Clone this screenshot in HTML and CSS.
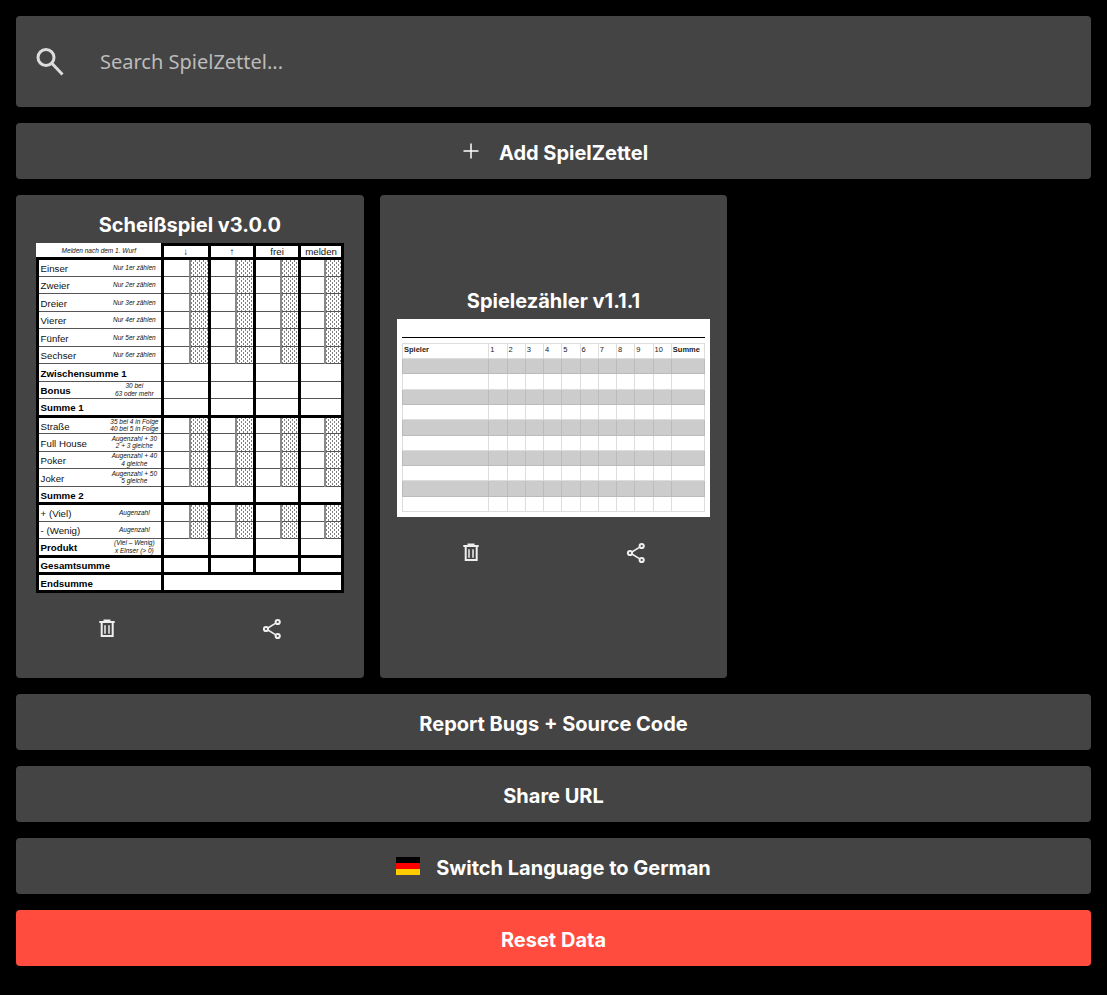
FILE: index.html
```html
<!DOCTYPE html>
<html lang="en">
<head>
  <meta charset="UTF-8" />
  <title>SpielZettel</title>
  <link rel="stylesheet" href="styles.css">
</head>
<body>
  <div class="search">
    <svg class="search-icon" viewBox="0 0 32 32" width="32" height="32"><circle cx="12" cy="11.500" r="8"/><path d="M17.800 17.300 28.500 28.500"/></svg>
    <input class="search-input" type="text" placeholder="Search SpielZettel...">
  </div>

  <button class="btn">
    <svg class="icon" viewBox="0 0 24 24" width="24" height="24"><path d="M12 4.500v15M4.500 12h15"/></svg>
    <span class="label">Add SpielZettel</span>
  </button>

  <div class="cards">
    <div class="card">
      <h2 class="card-title">Scheißspiel v3.0.0</h2>
      <table class="sheet">
        <colgroup>
          <col class="c-name"><col class="c-note">
          <col class="c-a1"><col class="c-d1"><col class="c-a2"><col class="c-d2"><col class="c-a3"><col class="c-d2"><col class="c-a4"><col class="c-d3">
        </colgroup>
        <tr class="head">
          <td class="head-note" colspan="2">Melden nach dem 1. Wurf</td>
          <td class="sec" colspan="2">↓</td><td class="sec" colspan="2">↑</td><td class="sec" colspan="2">frei</td><td class="sec" colspan="2">melden</td>
        </tr>
        <tr class="thick">
          <td class="name">Einser</td><td class="note">Nur 1er zählen</td>
          <td class="sec"></td><td class="dots"></td><td class="sec"></td><td class="dots"></td><td class="sec"></td><td class="dots"></td><td class="sec"></td><td class="dots"></td>
        </tr>
        <tr>
          <td class="name">Zweier</td><td class="note">Nur 2er zählen</td>
          <td class="sec"></td><td class="dots"></td><td class="sec"></td><td class="dots"></td><td class="sec"></td><td class="dots"></td><td class="sec"></td><td class="dots"></td>
        </tr>
        <tr>
          <td class="name">Dreier</td><td class="note">Nur 3er zählen</td>
          <td class="sec"></td><td class="dots"></td><td class="sec"></td><td class="dots"></td><td class="sec"></td><td class="dots"></td><td class="sec"></td><td class="dots"></td>
        </tr>
        <tr>
          <td class="name">Vierer</td><td class="note">Nur 4er zählen</td>
          <td class="sec"></td><td class="dots"></td><td class="sec"></td><td class="dots"></td><td class="sec"></td><td class="dots"></td><td class="sec"></td><td class="dots"></td>
        </tr>
        <tr>
          <td class="name">Fünfer</td><td class="note">Nur 5er zählen</td>
          <td class="sec"></td><td class="dots"></td><td class="sec"></td><td class="dots"></td><td class="sec"></td><td class="dots"></td><td class="sec"></td><td class="dots"></td>
        </tr>
        <tr>
          <td class="name">Sechser</td><td class="note">Nur 6er zählen</td>
          <td class="sec"></td><td class="dots"></td><td class="sec"></td><td class="dots"></td><td class="sec"></td><td class="dots"></td><td class="sec"></td><td class="dots"></td>
        </tr>
        <tr>
          <td class="name bold" colspan="2">Zwischensumme 1</td>
          <td class="sec" colspan="2"></td><td class="sec" colspan="2"></td><td class="sec" colspan="2"></td><td class="sec" colspan="2"></td>
        </tr>
        <tr>
          <td class="name bold">Bonus</td><td class="note">30 bei<br>63 oder mehr</td>
          <td class="sec" colspan="2"></td><td class="sec" colspan="2"></td><td class="sec" colspan="2"></td><td class="sec" colspan="2"></td>
        </tr>
        <tr>
          <td class="name bold" colspan="2">Summe 1</td>
          <td class="sec" colspan="2"></td><td class="sec" colspan="2"></td><td class="sec" colspan="2"></td><td class="sec" colspan="2"></td>
        </tr>
        <tr class="thick">
          <td class="name">Straße</td><td class="note">35 bei 4 in Folge<br>40 bei 5 in Folge</td>
          <td class="sec"></td><td class="dots"></td><td class="sec"></td><td class="dots"></td><td class="sec"></td><td class="dots"></td><td class="sec"></td><td class="dots"></td>
        </tr>
        <tr>
          <td class="name">Full House</td><td class="note">Augenzahl + 30<br>2 + 3 gleiche</td>
          <td class="sec"></td><td class="dots"></td><td class="sec"></td><td class="dots"></td><td class="sec"></td><td class="dots"></td><td class="sec"></td><td class="dots"></td>
        </tr>
        <tr>
          <td class="name">Poker</td><td class="note">Augenzahl + 40<br>4 gleiche</td>
          <td class="sec"></td><td class="dots"></td><td class="sec"></td><td class="dots"></td><td class="sec"></td><td class="dots"></td><td class="sec"></td><td class="dots"></td>
        </tr>
        <tr>
          <td class="name">Joker</td><td class="note">Augenzahl + 50<br>5 gleiche</td>
          <td class="sec"></td><td class="dots"></td><td class="sec"></td><td class="dots"></td><td class="sec"></td><td class="dots"></td><td class="sec"></td><td class="dots"></td>
        </tr>
        <tr>
          <td class="name bold" colspan="2">Summe 2</td>
          <td class="sec" colspan="2"></td><td class="sec" colspan="2"></td><td class="sec" colspan="2"></td><td class="sec" colspan="2"></td>
        </tr>
        <tr class="thick">
          <td class="name">+ (Viel)</td><td class="note">Augenzahl</td>
          <td class="sec"></td><td class="dots"></td><td class="sec"></td><td class="dots"></td><td class="sec"></td><td class="dots"></td><td class="sec"></td><td class="dots"></td>
        </tr>
        <tr>
          <td class="name">- (Wenig)</td><td class="note">Augenzahl</td>
          <td class="sec"></td><td class="dots"></td><td class="sec"></td><td class="dots"></td><td class="sec"></td><td class="dots"></td><td class="sec"></td><td class="dots"></td>
        </tr>
        <tr>
          <td class="name bold">Produkt</td><td class="note">(Viel – Wenig)<br>x Einser (&gt; 0)</td>
          <td class="sec" colspan="2"></td><td class="sec" colspan="2"></td><td class="sec" colspan="2"></td><td class="sec" colspan="2"></td>
        </tr>
        <tr class="thick">
          <td class="name bold" colspan="2">Gesamtsumme</td>
          <td class="sec" colspan="2"></td><td class="sec" colspan="2"></td><td class="sec" colspan="2"></td><td class="sec" colspan="2"></td>
        </tr>
        <tr class="thick">
          <td class="name bold" colspan="2">Endsumme</td>
          <td class="sec" colspan="8"></td>
        </tr>
      </table>
      <div class="card-actions">
        <button class="icon-btn"><svg class="icon icon-bold" viewBox="0 0 24 24" width="24" height="24"><path d="M4.300 5h15.400M9.500 5V3.500h5V5M6.700 5v14h11V5"/><path class="thin" d="M10 8.300v8.400M14 8.300v8.400"/></svg></button>
        <button class="icon-btn"><svg class="icon icon-bold" viewBox="0 0 24 24" width="24" height="24"><circle cx="17.700" cy="5" r="2.100"/><circle cx="6" cy="12" r="2.100"/><circle cx="17.700" cy="19" r="2.100"/><path class="thin" d="M7.900 11 15.800 6.100M7.900 13 15.800 17.900"/></svg></button>
      </div>
    </div>

    <div class="card">
      <h2 class="card-title">Spielezähler v1.1.1</h2>
      <div class="counter">
        <div class="counter-line"></div>
        <table class="counter-table">
          <colgroup>
            <col class="n-name"><col span="10" class="n-round"><col class="n-sum">
          </colgroup>
          <tr><th>Spieler</th><td>1</td><td>2</td><td>3</td><td>4</td><td>5</td><td>6</td><td>7</td><td>8</td><td>9</td><td>10</td><th>Summe</th></tr>
          <tr class="grey"><td></td><td></td><td></td><td></td><td></td><td></td><td></td><td></td><td></td><td></td><td></td><td></td></tr>
          <tr><td></td><td></td><td></td><td></td><td></td><td></td><td></td><td></td><td></td><td></td><td></td><td></td></tr>
          <tr class="grey"><td></td><td></td><td></td><td></td><td></td><td></td><td></td><td></td><td></td><td></td><td></td><td></td></tr>
          <tr><td></td><td></td><td></td><td></td><td></td><td></td><td></td><td></td><td></td><td></td><td></td><td></td></tr>
          <tr class="grey"><td></td><td></td><td></td><td></td><td></td><td></td><td></td><td></td><td></td><td></td><td></td><td></td></tr>
          <tr><td></td><td></td><td></td><td></td><td></td><td></td><td></td><td></td><td></td><td></td><td></td><td></td></tr>
          <tr class="grey"><td></td><td></td><td></td><td></td><td></td><td></td><td></td><td></td><td></td><td></td><td></td><td></td></tr>
          <tr><td></td><td></td><td></td><td></td><td></td><td></td><td></td><td></td><td></td><td></td><td></td><td></td></tr>
          <tr class="grey"><td></td><td></td><td></td><td></td><td></td><td></td><td></td><td></td><td></td><td></td><td></td><td></td></tr>
          <tr><td></td><td></td><td></td><td></td><td></td><td></td><td></td><td></td><td></td><td></td><td></td><td></td></tr>
        </table>
      </div>
      <div class="card-actions">
        <button class="icon-btn"><svg class="icon icon-bold" viewBox="0 0 24 24" width="24" height="24"><path d="M4.300 5h15.400M9.500 5V3.500h5V5M6.700 5v14h11V5"/><path class="thin" d="M10 8.300v8.400M14 8.300v8.400"/></svg></button>
        <button class="icon-btn"><svg class="icon icon-bold" viewBox="0 0 24 24" width="24" height="24"><circle cx="17.700" cy="5" r="2.100"/><circle cx="6" cy="12" r="2.100"/><circle cx="17.700" cy="19" r="2.100"/><path class="thin" d="M7.900 11 15.800 6.100M7.900 13 15.800 17.900"/></svg></button>
      </div>
    </div>
  </div>

  <button class="btn"><span class="label">Report Bugs + Source Code</span></button>
  <button class="btn"><span class="label">Share URL</span></button>
  <button class="btn">
    <span class="flag"><i class="flag-black"></i><i class="flag-red"></i><i class="flag-gold"></i></span>
    <span class="label">Switch Language to German</span>
  </button>
  <button class="btn btn-danger"><span class="label">Reset Data</span></button>
</body>
</html>
```

FILE: styles.css
```css
html {
  background: #000;
}

body {
  margin: 0;
  padding: 16px 16px 29px;
  display: flex;
  flex-direction: column;
  gap: 16px;
  background: #000;
  color: #fff;
  font-family: Inter, Arial, sans-serif;
}

.search {
  height: 91px;
  display: flex;
  align-items: center;
  background: #444;
  border-radius: 4px;
}

.search-icon {
  flex: none;
  margin-left: 18px;
  fill: none;
  stroke: #ddd;
  stroke-width: 3;
}

.search-input {
  flex: 1;
  margin-left: 34px;
  padding: 0;
  border: none;
  outline: none;
  background: transparent;
  color: #fff;
  font-family: "Noto Sans", sans-serif;
  font-size: 20px;
}

.search-input::placeholder {
  color: #bbb;
  opacity: 1;
}

.btn {
  height: 56px;
  display: flex;
  align-items: center;
  justify-content: center;
  gap: 16px;
  padding: 0;
  border: none;
  border-radius: 4px;
  background: #444;
  color: #fff;
  font-family: Inter, Arial, sans-serif;
  font-size: 20px;
  font-weight: 700;
}

.btn-danger {
  background: #ff4c3e;
}

.label {
  padding-top: 4px;
}

.icon {
  display: block;
  fill: none;
  stroke: #fff;
  stroke-width: 1.500;
}

.icon-bold {
  stroke: #eee;
  stroke-width: 2;
}

.icon-bold .thin {
  stroke-width: 1.500;
}

.flag {
  display: block;
  width: 24px;
}

.flag i {
  display: block;
  height: 6px;
}

.flag-black { background: #000; }
.flag-red { background: #f00; }
.flag-gold { background: #ffcc00; }

.cards {
  display: grid;
  grid-template-columns: repeat(3, 1fr);
  gap: 16px;
}

.card {
  padding: 16px;
  display: flex;
  flex-direction: column;
  align-items: center;
  justify-content: center;
  background: #444;
  border-radius: 4px;
}

.card-title {
  margin: 0;
  padding: 2px 0 6px;
  font-size: 20px;
  line-height: 24px;
  font-weight: 700;
}

.card-actions {
  height: 69px;
  align-self: stretch;
  margin: 0 -16px;
  display: flex;
  justify-content: space-evenly;
  align-items: flex-start;
}

.icon-btn {
  width: 147px;
  height: 48px;
  margin-top: 12px;
  padding: 0;
  display: flex;
  align-items: center;
  justify-content: center;
  border: none;
  background: transparent;
}

/* score sheet */
.sheet {
  width: 308.500px;
  table-layout: fixed;
  border-collapse: collapse;
  border: 3px solid #000;
  background: #fff;
  color: #111;
  font-family: "Liberation Sans", Arial, sans-serif;
  font-size: 9.700px;
}

.c-name { width: 71px; }
.c-note { width: 54px; }
.c-a1 { width: 28px; }
.c-a2 { width: 27px; }
.c-a3 { width: 26.500px; }
.c-a4 { width: 25px; }
.c-d1 { width: 19px; }
.c-d2 { width: 18.500px; }
.c-d3 { width: 18px; }

.sheet tr {
  height: 17.500px;
}

.sheet tr.head {
  height: 14px;
}

.sheet td {
  padding: 0;
  border: 1px solid #555;
  overflow: hidden;
  white-space: nowrap;
}

.sheet .thick td {
  border-top: 3px solid #000;
}

.sheet .head td {
  text-align: center;
  border-bottom: 3px solid #000;
}

.sheet .head-note {
  border-top: hidden;
  border-left: hidden;
  font-size: 6.500px;
  font-style: italic;
}

.sheet .name {
  padding: 2px 0 0 2px;
  border-right: none;
}

.sheet .bold {
  font-weight: 700;
  color: #000;
}

.sheet .note {
  border-left: none;
  text-align: center;
  font-size: 6.500px;
  line-height: 7.500px;
  font-style: italic;
}

.sheet .sec {
  border-left: 3px solid #000;
}

.sheet .dots {
  border-left: 2px solid #888;
  background-color: #fff;
  background-image:
    conic-gradient(from 270deg at 1px 1px, #000 25%, transparent 0),
    conic-gradient(from 270deg at 1px 1px, #000 25%, transparent 0);
  background-size: 4px 4px;
  background-position: 0 0, 2px 2px;
}

/* round counter sheet */
.counter {
  width: 313px;
  height: 198px;
  padding: 18px 5px 0;
  box-sizing: border-box;
  background: #fff;
}

.counter-line {
  height: 1px;
  margin: 0 0 5px;
  background: #000;
}

.counter-table {
  width: 303px;
  table-layout: fixed;
  border-collapse: collapse;
  color: #222;
  font-family: "Liberation Sans", Arial, sans-serif;
  font-size: 7.500px;
}

.n-name { width: 86px; }
.n-round { width: 18.200px; }
.n-sum { width: 33px; }

.counter-table tr {
  height: 15.300px;
}

.counter-table td,
.counter-table th {
  padding: 0 0 2px 1px;
  border: 1px solid #ddd;
  text-align: left;
  overflow: hidden;
  white-space: nowrap;
}

.counter-table .grey td {
  background: #ccc;
  border-color: #bbb;
}
```
